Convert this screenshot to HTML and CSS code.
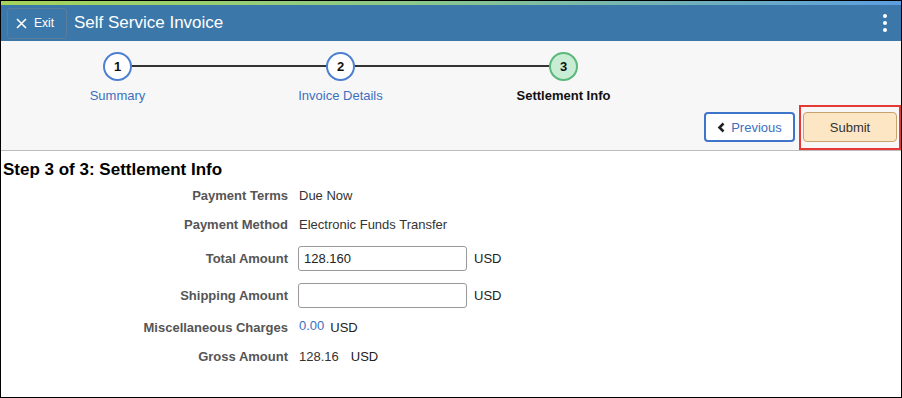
FILE: index.html
```html
<!DOCTYPE html>
<html lang="en">
<head>
    <meta charset="UTF-8">
    <meta name="viewport" content="width=device-width, initial-scale=1.0">
    <title>Self Service Invoice</title>
    <link rel="stylesheet" href="styles.css">
</head>
<body>
<div class="frame">
    <div class="brand-strip"></div>
    <header class="app-header">
        <button class="exit-btn" type="button">
            <svg width="11" height="11" viewBox="0 0 11 11"><path d="M1 1 L10 10 M10 1 L1 10" stroke="#fff" stroke-width="1.6" fill="none"/></svg>
            <span>Exit</span>
        </button>
        <h1 class="app-title">Self Service Invoice</h1>
        <div class="kebab"><span></span><span></span><span></span></div>
    </header>

    <div class="train">
        <div class="steps">
            <div class="step done">
                <div class="step-circle">1</div>
                <div class="step-label">Summary</div>
            </div>
            <div class="step done">
                <div class="step-circle">2</div>
                <div class="step-label">Invoice Details</div>
            </div>
            <div class="step current">
                <div class="step-circle">3</div>
                <div class="step-label">Settlement Info</div>
            </div>
        </div>
        <div class="actions">
            <button class="btn btn-prev" type="button">
                <svg width="9" height="11" viewBox="0 0 9 11"><path d="M6.5 1.5 L2.5 5.5 L6.5 9.5" stroke="#222" stroke-width="2.6" fill="none"/></svg>
                Previous
            </button>
            <span class="highlight">
                <button class="btn btn-submit" type="button">Submit</button>
            </span>
        </div>
    </div>

    <main class="content">
        <h2 class="page-title">Step 3 of 3: Settlement Info</h2>
        <div class="form-grid">
            <div class="lbl">Payment Terms</div>
            <div class="val">Due Now</div>

            <div class="lbl">Payment Method</div>
            <div class="val">Electronic Funds Transfer</div>

            <div class="lbl row-total">Total Amount</div>
            <div class="val row-total"><input class="amount" type="text" value="128.160"><span class="cur">USD</span></div>

            <div class="lbl row-ship">Shipping Amount</div>
            <div class="val row-ship"><input class="amount" type="text" value=""><span class="cur">USD</span></div>

            <div class="lbl">Miscellaneous Charges</div>
            <div class="val"><span class="link">0.00</span><span class="cur small-gap">USD</span></div>

            <div class="lbl">Gross Amount</div>
            <div class="val">128.16<span class="cur wide-gap">USD</span></div>
        </div>
    </main>
</div>
</body>
</html>
```

FILE: styles.css
```css
* {
    box-sizing: border-box;
}
body {
    margin: 0;
    font-family: "Liberation Sans", Arial, sans-serif;
    font-size: 13px;
    color: #333;
}
.frame {
    width: 902px;
    height: 398px;
    border: 1px solid #000;
    background: #fff;
    overflow: hidden;
}

/* header */
.brand-strip {
    height: 4px;
    background: linear-gradient(to right, #a5d45a 0%, #8cc98a 45%, #5c9ee0 100%);
}
.app-header {
    height: 36px;
    background: #3b77a8;
    display: flex;
    align-items: center;
    padding-left: 6px;
    padding-right: 14px;
}
.exit-btn {
    height: 31px;
    width: 60px;
    background: transparent;
    border: 1px solid #5b7d9b;
    border-radius: 3px;
    color: #fff;
    font-family: inherit;
    font-size: 12px;
    display: flex;
    align-items: center;
    gap: 7px;
    padding: 0 0 0 8px;
}
.app-title {
    margin: 0 0 0 7px;
    font-size: 17px;
    font-weight: normal;
    color: #fff;
    flex: 1;
}
.kebab {
    display: flex;
    flex-direction: column;
    gap: 3px;
}
.kebab span {
    width: 4px;
    height: 4px;
    border-radius: 50%;
    background: #fff;
}

/* train stop */
.train {
    background: #f7f7f7;
    border-bottom: 1px solid #bdbdbd;
    height: 110px;
    padding-top: 11px;
}
.steps {
    display: flex;
    padding-left: 5px;
}
.step {
    width: 223px;
    display: flex;
    flex-direction: column;
    align-items: center;
    position: relative;
}
.step + .step::before {
    content: "";
    position: absolute;
    top: 13px;
    left: -50%;
    width: 100%;
    height: 2px;
    background: #333;
}
.step-circle {
    width: 29px;
    height: 29px;
    border-radius: 50%;
    border: 2px solid #4d80d0;
    background: #fff;
    font-weight: bold;
    color: #111;
    display: flex;
    align-items: center;
    justify-content: center;
    position: relative;
    z-index: 1;
}
.step.current .step-circle {
    border-color: #5ab87a;
    background: #c8ecd4;
}
.step-label {
    margin-top: 7px;
    color: #3d6fbf;
    line-height: 16px;
}
.step.current .step-label {
    color: #111;
    font-weight: bold;
}
.actions {
    display: flex;
    justify-content: flex-end;
    align-items: flex-start;
    margin-top: 1px;
}
.btn {
    height: 30px;
    border-radius: 4px;
    font-family: inherit;
    font-size: 13px;
    cursor: pointer;
}
.btn-prev {
    width: 91px;
    margin-top: 7px;
    margin-right: 4px;
    background: #fff;
    border: 2px solid #3e74c9;
    color: #3d6fbf;
    display: flex;
    align-items: center;
    justify-content: center;
    gap: 5px;
}
.highlight {
    border: 2px solid #e53935;
    padding: 5px 2px 5px 2px;
    height: 45px;
}
.btn-submit {
    width: 94px;
    background: #fde6c4;
    border: 1px solid #c9a26e;
    color: #333;
}

/* content */
.content {
    padding-left: 2px;
}
.page-title {
    margin: 8px 0 0;
    font-size: 17px;
    line-height: 21px;
    color: #000;
}
.form-grid {
    display: grid;
    grid-template-columns: 285px auto;
    column-gap: 11px;
    margin-top: 1px;
}
.lbl, .val {
    height: 29px;
    display: flex;
    align-items: center;
}
.lbl {
    justify-content: flex-end;
    font-weight: bold;
    color: #555;
}
.val {
    color: #333;
}
.row-total {
    height: 39px;
}
.row-ship {
    height: 35px;
}
.amount {
    width: 169px;
    height: 25px;
    border: 1px solid #999;
    border-radius: 3px;
    font-family: inherit;
    font-size: 13px;
    color: #222;
    padding: 0 5px;
    margin-left: -1px;
}
.cur {
    color: #222;
    margin-left: 7px;
}
.small-gap {
    margin-left: 6px;
}
.wide-gap {
    margin-left: 12px;
}
.link {
    color: #3d6fbf;
    margin-top: -4px;
}
```
